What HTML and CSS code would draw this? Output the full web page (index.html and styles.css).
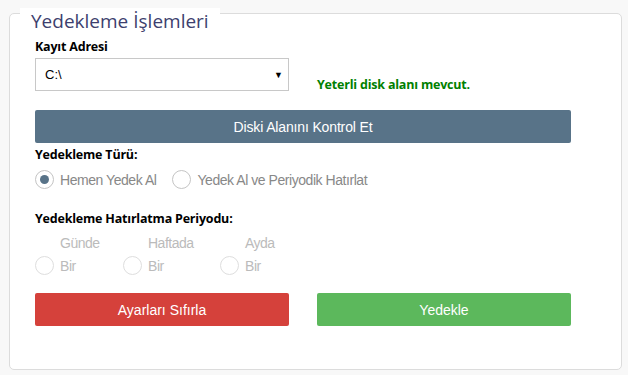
FILE: index.html
```html
<!DOCTYPE html>
<html lang="tr">
<head>
  <meta charset="UTF-8">
  <meta name="viewport" content="width=device-width, initial-scale=1.0">
  <title>Yedekleme İşlemleri</title>
  <link rel="stylesheet" href="styles.css">
</head>
<body>
  <div class="card">
    <h2 class="card-title">Yedekleme İşlemleri</h2>

    <div class="row">
      <div class="form-group">
        <label class="field-label">Kayıt Adresi</label>
        <div class="select">
          <span>C:\</span>
          <span class="select-arrow">▼</span>
        </div>
      </div>
      <div class="disk-status">Yeterli disk alanı mevcut.</div>
    </div>

    <button class="btn btn-check">Diski Alanını Kontrol Et</button>

    <div class="field-label">Yedekleme Türü:</div>
    <div class="radio-row">
      <label class="radio">
        <span class="radio-circle checked"></span>
        <span>Hemen Yedek Al</span>
      </label>
      <label class="radio">
        <span class="radio-circle"></span>
        <span>Yedek Al ve Periyodik Hatırlat</span>
      </label>
    </div>

    <div class="field-label period-label">Yedekleme Hatırlatma Periyodu:</div>
    <div class="period-row">
      <div class="period">
        <span class="period-name">Günde</span>
        <label class="radio disabled">
          <span class="radio-circle"></span>
          <span>Bir</span>
        </label>
      </div>
      <div class="period">
        <span class="period-name">Haftada</span>
        <label class="radio disabled">
          <span class="radio-circle"></span>
          <span>Bir</span>
        </label>
      </div>
      <div class="period">
        <span class="period-name">Ayda</span>
        <label class="radio disabled">
          <span class="radio-circle"></span>
          <span>Bir</span>
        </label>
      </div>
    </div>

    <div class="row actions">
      <button class="btn btn-reset">Ayarları Sıfırla</button>
      <button class="btn btn-backup">Yedekle</button>
    </div>
  </div>
</body>
</html>
```

FILE: styles.css
```css
:root {
  --border: #dcdcdc;
  --title: #3d3f6e;
  --slate: #587388;
  --red: #d5413b;
  --green: #5cb85c;
  --muted: #888;
  --faint: #bbb;
}

* {
  margin: 0;
  padding: 0;
  box-sizing: border-box;
}

body {
  background: #f8f8f8;
  font-family: 'Liberation Sans', Arial, sans-serif;
  color: #000;
  padding: 13px 6px 5px 9px;
}

.card {
  background: #fff;
  border: 1px solid var(--border);
  border-radius: 5px;
  padding: 0 50px 43px 25px;
  height: 357px;
}

.card-title {
  display: inline-block;
  margin: -11px 0 0 -15px;
  padding: 1px 11px 0;
  background: #fff;
  font-family: 'Open Sans', 'Noto Sans', sans-serif;
  font-weight: 400;
  font-size: 19px;
  line-height: 24px;
  color: var(--title);
}

.row {
  display: grid;
  grid-template-columns: 254px 254px;
  column-gap: 28px;
}

.field-label {
  display: block;
  font-family: 'Open Sans', 'Noto Sans', sans-serif;
  font-weight: 700;
  font-size: 12.5px;
  line-height: 18px;
  letter-spacing: -0.2px;
}

.form-group .field-label {
  margin-top: 5px;
  margin-bottom: 2px;
}

.select {
  height: 33px;
  border: 1px solid #c8c8c8;
  display: flex;
  align-items: center;
  justify-content: space-between;
  padding: 0 5px 0 9px;
  font-size: 13px;
}

.select-arrow {
  font-size: 9px;
}

.disk-status {
  align-self: end;
  margin-bottom: -2px;
  font-family: 'Open Sans', 'Noto Sans', sans-serif;
  font-weight: 700;
  font-size: 12.5px;
  color: #008000;
  letter-spacing: -0.2px;
}

.btn {
  display: block;
  width: 100%;
  height: 33px;
  border: none;
  border-radius: 2px;
  color: #fff;
  font-family: 'Liberation Sans', Arial, sans-serif;
  font-size: 14px;
  letter-spacing: 0;
}

.btn-check {
  margin-top: 19px;
  background: var(--slate);
  margin-bottom: 3px;
  letter-spacing: -0.15px;
}

.btn-reset {
  background: var(--red);
}

.btn-backup {
  background: var(--green);
}

.radio-row {
  display: flex;
  gap: 16px;
  margin-top: 6px;
}

.radio {
  display: flex;
  align-items: center;
  gap: 6px;
  font-size: 14px;
  color: var(--muted);
  letter-spacing: -0.45px;
}

.radio-circle {
  width: 19px;
  height: 19px;
  border: 1px solid #c4c4c4;
  border-radius: 50%;
  display: flex;
  align-items: center;
  justify-content: center;
}

.radio-circle.checked::after {
  content: '';
  width: 9px;
  height: 9px;
  border-radius: 50%;
  background: var(--slate);
}

.period-label {
  margin-top: 21px;
}

.period-row {
  display: grid;
  grid-template-columns: 88px 97px auto;
  margin-top: 6px;
}

.period {
  display: flex;
  flex-direction: column;
}

.period-name {
  margin-left: 25px;
  font-size: 14px;
  line-height: 18px;
  color: var(--faint);
  letter-spacing: -0.5px;
  margin-bottom: 4px;
}

.radio.disabled {
  color: var(--faint);
}

.radio.disabled .radio-circle {
  border-color: #dedede;
}

.actions {
  margin-top: 18px;
}
```
